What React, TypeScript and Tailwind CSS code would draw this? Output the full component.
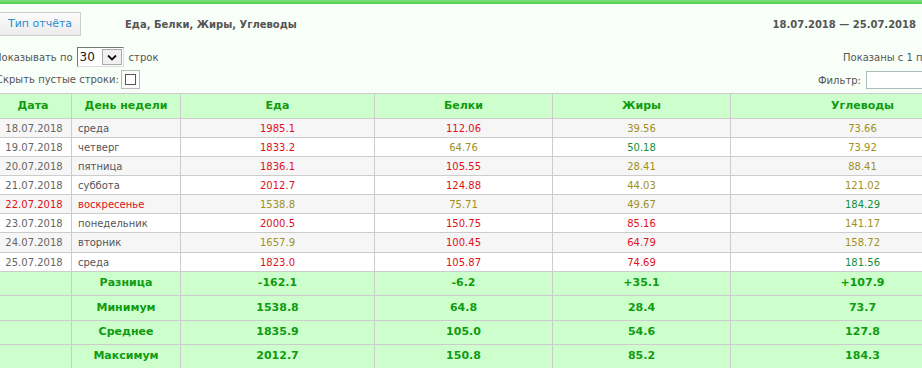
import React from "react";

type Tone = "r" | "o" | "g";

const rows: { date: string; day: string; red?: boolean; h: string; v: [string, Tone][] }[] = [
  { date: "18.07.2018", day: "среда", h: "h-[19px]", v: [["1985.1", "r"], ["112.06", "r"], ["39.56", "o"], ["73.66", "o"]] },
  { date: "19.07.2018", day: "четверг", h: "h-[19px]", v: [["1833.2", "r"], ["64.76", "o"], ["50.18", "g"], ["73.92", "o"]] },
  { date: "20.07.2018", day: "пятница", h: "h-[19px]", v: [["1836.1", "r"], ["105.55", "r"], ["28.41", "o"], ["88.41", "o"]] },
  { date: "21.07.2018", day: "суббота", h: "h-[19px]", v: [["2012.7", "r"], ["124.88", "r"], ["44.03", "o"], ["121.02", "o"]] },
  { date: "22.07.2018", day: "воскресенье", red: true, h: "h-[19px]", v: [["1538.8", "o"], ["75.71", "o"], ["49.67", "o"], ["184.29", "g"]] },
  { date: "23.07.2018", day: "понедельник", h: "h-[19px]", v: [["2000.5", "r"], ["150.75", "r"], ["85.16", "r"], ["141.17", "o"]] },
  { date: "24.07.2018", day: "вторник", h: "h-[20px]", v: [["1657.9", "o"], ["100.45", "r"], ["64.79", "r"], ["158.72", "o"]] },
  { date: "25.07.2018", day: "среда", h: "h-[19px]", v: [["1823.0", "r"], ["105.87", "r"], ["74.69", "r"], ["181.56", "g"]] },
];

const summary: [string, string, string[]][] = [
  ["Разница", "h-[24px]", ["-162.1", "-6.2", "+35.1", "+107.9"]],
  ["Минимум", "h-[25px]", ["1538.8", "64.8", "28.4", "73.7"]],
  ["Среднее", "h-[24px]", ["1835.9", "105.0", "54.6", "127.8"]],
  ["Максимум", "h-[24px]", ["2012.7", "150.8", "85.2", "184.3"]],
];

const tone: Record<Tone, string> = {
  r: "text-[#e0101a]",
  o: "text-[#a09020]",
  g: "text-[#109040]",
};

const headers = ["Дата", "День недели", "Еда", "Белки", "Жиры", "Углеводы"];
const widths = ["w-[77px]", "w-[109px]", "w-[194px]", "w-[178px]", "w-[178px]", "w-[264px]"];

export default function App() {
  return (
    <div className="w-[922px] h-[368px] overflow-hidden bg-[#f8fff8] text-[10px] text-[#555] font-['DejaVu_Sans',Verdana,sans-serif]">
      <div className="h-[4px] bg-gradient-to-b from-[#7ee07e] to-[#4fcf4f]" />

      <div className="mt-[8px] flex h-[24px] items-center pr-[6px]">
        <button className="-ml-[1px] h-[24px] w-[82px] border border-[#ccc] bg-gradient-to-b from-[#fbfbfb] to-[#ececec] text-[11px] text-[#2a8cd0]">
          Тип отчёта
        </button>
        <div className="ml-[44px] text-[10px] font-bold text-[#555]">Еда, Белки, Жиры, Углеводы</div>
        <div className="ml-auto text-[10px] font-bold text-[#555]">18.07.2018 — 25.07.2018</div>
      </div>

      <div className="-ml-[6px] w-[1002px]">
        <div className="mt-[11px] flex justify-between">
          <div>
            <div className="flex h-[20px] items-center">
              <span>Показывать по</span>
              <div className="ml-[4px] flex h-[20px] w-[47px] items-center border border-t-[#777] border-l-[#777] border-b-[#ddd] border-r-[#ddd] bg-white">
                <span className="ml-[2px] text-[12px] text-[#222]">30</span>
                <span className="ml-auto mr-[1px] flex h-[16px] w-[20px] items-center justify-center border border-[#aaa] bg-[#f0f0f0]">
                  <svg width="10" height="7" viewBox="0 0 10 7">
                    <polyline points="1,1.5 5,5.5 9,1.5" fill="none" stroke="#111" strokeWidth="1.8" />
                  </svg>
                </span>
              </div>
              <span className="ml-[5px]">строк</span>
            </div>
            <div className="mt-[3px] flex h-[19px] items-center">
              <span className="ml-[2px]">Скрыть пустые строки:</span>
              <span className="ml-[2px] flex h-[19px] w-[19px] items-center justify-center border border-[#bbb] bg-[#fafafa]">
                <span className="h-[11px] w-[11px] border border-[#555] bg-white" />
              </span>
            </div>
          </div>
          <div className="flex w-[153px] flex-col">
            <div className="flex h-[20px] items-center whitespace-nowrap">Показаны с 1 по 8 из 8</div>
            <div className="mt-[4px] flex h-[18px] items-center">
              <span className="-ml-[25px]">Фильтр:</span>
              <span className="ml-[5px] h-[18px] flex-1 border border-[#abb] bg-white" />
            </div>
          </div>
        </div>

        <table className="mt-[4px] w-[1000px] table-fixed border-collapse">
          <thead>
            <tr className="h-[25px] bg-[#ccffcc]">
              {headers.map((h, i) => (
                <th key={h} className={`${widths[i]} border border-[#ccc] text-[11px] font-bold text-[#109b10]`}>
                  {h}
                </th>
              ))}
            </tr>
          </thead>
          <tbody>
            {rows.map((r, i) => (
              <tr key={r.date} className={`${r.h} ${i % 2 === 0 ? "bg-[#f6f6f6]" : "bg-white"}`}>
                <td className={`border border-[#ccc] pl-[2px] text-center ${r.red ? "text-[#e0101a]" : "text-[#666]"}`}>{r.date}</td>
                <td className={`border border-[#ccc] pl-[6px] ${r.red ? "text-[#e0101a]" : "text-[#555]"}`}>{r.day}</td>
                {r.v.map(([val, t], j) => (
                  <td key={j} className={`border border-[#ccc] text-center ${tone[t]}`}>
                    {val}
                  </td>
                ))}
              </tr>
            ))}
            {summary.map(([label, h, vals]) => (
              <tr key={label} className={`${h} bg-[#ccffcc] text-[11px] font-bold text-[#109b10]`}>
                <td className="border border-[#ccc]" />
                <td className="border border-[#ccc] text-center">{label}</td>
                {vals.map((v, j) => (
                  <td key={j} className="border border-[#ccc] text-center">
                    {v}
                  </td>
                ))}
              </tr>
            ))}
          </tbody>
        </table>
      </div>
    </div>
  );
}
